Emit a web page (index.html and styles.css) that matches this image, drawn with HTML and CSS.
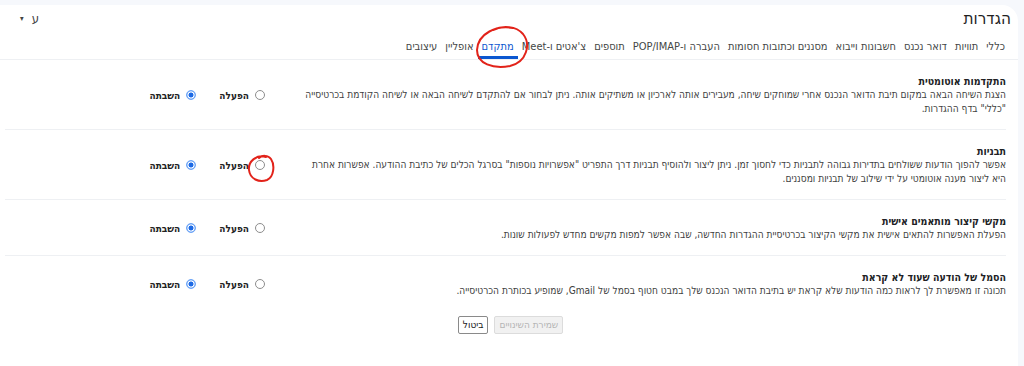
FILE: index.html
```html
<!DOCTYPE html>
<html lang="he" dir="rtl">
<head>
    <meta charset="UTF-8">
    <title>הגדרות</title>
    <link rel="stylesheet" href="styles.css">
</head>
<body>
    <div class="panel">
        <!-- Header -->
        <header class="header">
            <h1 class="title">הגדרות</h1>
            <div class="input-tools">ע <span class="caret">▾</span></div>
        </header>

        <nav class="tabs">
            <a href="#">כללי</a>
            <a href="#">תוויות</a>
            <a href="#">דואר נכנס</a>
            <a href="#">חשבונות וייבוא</a>
            <a href="#">מסננים וכתובות חסומות</a>
            <a href="#">העברה ו-POP/IMAP</a>
            <a href="#">תוספים</a>
            <a href="#">צ'אטים ו-Meet</a>
            <a href="#" class="active">מתקדם
                <svg class="mark mark-tab" width="58" height="46" viewBox="0 0 58 46"><path d="M38 3 C22 0 3 8 2 25 C2 39 18 44 35 41 C52 37 56 19 48 9 C41 1 28 0 18 5" /></svg>
            </a>
            <a href="#">אופליין</a>
            <a href="#">עיצובים</a>
        </nav>

        <div class="content">
            <div class="row">
                <div class="info">
                    <div class="row-title">התקדמות אוטומטית</div>
                    <div class="row-desc">הצגת השיחה הבאה במקום תיבת הדואר הנכנס אחרי שמוחקים שיחה, מעבירים אותה לארכיון או משתיקים אותה. ניתן לבחור אם להתקדם לשיחה הבאה או לשיחה הקודמת בכרטיסייה "כללי" בדף ההגדרות.</div>
                </div>
                <div class="options">
                    <label class="opt"><input type="radio" name="r1">הפעלה</label>
                    <label class="opt"><input type="radio" name="r1" checked>השבתה</label>
                </div>
            </div>

            <div class="row">
                <div class="info">
                    <div class="row-title">תבניות</div>
                    <div class="row-desc">אפשר להפוך הודעות ששולחים בתדירות גבוהה לתבניות כדי לחסוך זמן. ניתן ליצור ולהוסיף תבניות דרך התפריט "אפשרויות נוספות" בסרגל הכלים של כתיבת ההודעה. אפשרות אחרת היא ליצור מענה אוטומטי על ידי שילוב של תבניות ומסננים.</div>
                </div>
                <div class="options">
                    <label class="opt"><input type="radio" name="r2">הפעלה
                        <svg class="mark mark-radio" width="34" height="36" viewBox="0 0 34 36"><path d="M20 5 C10 2 2 10 3 18 C4 27 13 31 21 28 C28 25 29 13 25 7 C22 3 16 3 13 6" /></svg>
                    </label>
                    <label class="opt"><input type="radio" name="r2" checked>השבתה</label>
                </div>
            </div>

            <div class="row">
                <div class="info">
                    <div class="row-title">מקשי קיצור מותאמים אישית</div>
                    <div class="row-desc">הפעלת האפשרות להתאים אישית את מקשי הקיצור בכרטיסיית ההגדרות החדשה, שבה אפשר למפות מקשים מחדש לפעולות שונות.</div>
                </div>
                <div class="options">
                    <label class="opt"><input type="radio" name="r3">הפעלה</label>
                    <label class="opt"><input type="radio" name="r3" checked>השבתה</label>
                </div>
            </div>

            <div class="row last">
                <div class="info">
                    <div class="row-title">הסמל של הודעה שעוד לא קראת</div>
                    <div class="row-desc">תכונה זו מאפשרת לך לראות כמה הודעות שלא קראת יש בתיבת הדואר הנכנס שלך במבט חטוף בסמל של Gmail, שמופיע בכותרת הכרטיסייה.</div>
                </div>
                <div class="options">
                    <label class="opt"><input type="radio" name="r4">הפעלה</label>
                    <label class="opt"><input type="radio" name="r4" checked>השבתה</label>
                </div>
            </div>

            <div class="actions">
                <button class="btn" disabled>שמירת השינויים</button>
                <button class="btn">ביטול</button>
            </div>
        </div>
    </div>
</body>
</html>
```

FILE: styles.css
```css
body {
    margin: 0;
    background: #f6f8fc;
    font-family: "DejaVu Sans Condensed", "DejaVu Sans", "Liberation Sans", sans-serif;
    color: #222;
    height: 366px;
    overflow: hidden;
}

.panel {
    margin: 5px 6px 0 0;
    background: #fff;
    border-radius: 16px 16px 0 0;
    border-top-left-radius: 0;
    height: 361px;
}

.header {
    display: flex;
    justify-content: space-between;
    align-items: center;
    padding: 2px 7px 0 20px;
    height: 22px;
}

.title {
    margin: 0;
    font-size: 17px;
    font-weight: normal;
    line-height: 22px;
    color: #1f1f1f;
}

.input-tools {
    font-size: 13px;
    color: #444;
    display: flex;
    align-items: center;
    gap: 8px;
}

.caret {
    font-size: 8px;
}

.tabs {
    display: flex;
    padding: 0 9px;
    border-bottom: 1px solid #eef0f3;
}

.tabs a {
    position: relative;
    font-size: 11px;
    line-height: 14px;
    color: #444746;
    text-decoration: none;
    padding: 11px 4px 2px;
    border-bottom: 3px solid transparent;
}

.tabs a.active {
    color: #0b57d0;
    border-bottom-color: #0b57d0;
}

.content {
    padding: 0 12px 0 5px;
}

.row {
    display: flex;
    align-items: center;
    padding: 14px 0 13px;
    border-bottom: 1px solid #eef0f3;
}

.row.last {
    border-bottom: none;
}

.info {
    width: 704px;
    margin-left: 37px;
    line-height: 14px;
}

.row-title {
    font-size: 10.5px;
    font-weight: bold;
    color: #202124;
}

.row-desc {
    font-size: 10.1px;
    color: #404040;
}

.options {
    display: flex;
    gap: 23px;
}

.opt {
    position: relative;
    display: flex;
    align-items: center;
    gap: 6px;
    font-size: 10px;
    font-weight: bold;
    color: #222;
}

.opt input {
    appearance: none;
    margin: 0;
    width: 10px;
    height: 10px;
    border: 1px solid #8d8d8d;
    border-radius: 50%;
    background: #fff;
}

.opt input:checked {
    border-color: #6aa3f7;
    background: radial-gradient(circle, #1d6ae5 0 2.2px, #fff 2.8px 3.2px, #8fbaf8 3.8px);
}

.actions {
    display: flex;
    justify-content: center;
    gap: 6px;
    padding: 5px 0 0 10px;
}

.btn {
    font-family: "DejaVu Sans Condensed", "DejaVu Sans", sans-serif;
    font-size: 10px;
    line-height: 14px;
    padding: 1px 4px;
    background: #fff;
    border: 1px solid #8a8a8a;
    border-radius: 2px;
    color: #222;
}

.btn:disabled {
    background: #f1f1f1;
    border-color: #dcdcdc;
    color: #b5b5b5;
}

/* red hand-drawn marks */
.mark {
    position: absolute;
    overflow: visible;
    pointer-events: none;
}

.mark path {
    fill: none;
    stroke: #e2231a;
    stroke-width: 2;
    stroke-linecap: round;
}

.mark-tab {
    top: -4px;
    left: -3px;
}

.mark-radio {
    top: -8px;
    right: -15px;
}
```
